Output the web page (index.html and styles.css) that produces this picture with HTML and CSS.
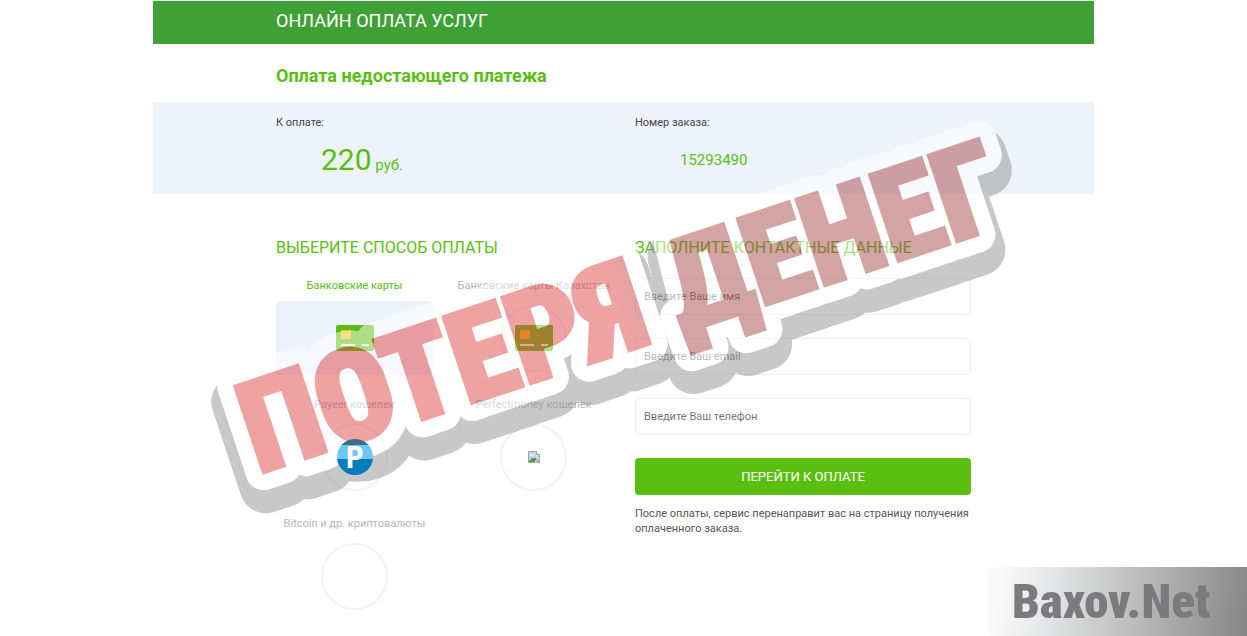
FILE: index.html
```html
<!DOCTYPE html>
<html lang="ru">

	<head>
		<meta charset="UTF-8">
		<title>Онлайн оплата услуг</title>
		<link rel="stylesheet" href="styles.css">
	</head>

	<body>
		<div class="page">
			<header class="header">
				<div class="wrap">ОНЛАЙН ОПЛАТА УСЛУГ</div>
			</header>
			<h1 class="title wrap">Оплата недостающего платежа</h1>
			<div class="order">
				<div class="wrap cols">
					<div>
						<div class="order-label">К оплате:</div>
						<div class="order-value"><span class="sum">220</span> руб.</div>
					</div>
					<div>
						<div class="order-label">Номер заказа:</div>
						<div class="order-value">15293490</div>
					</div>
				</div>
			</div>
			<form class="wrap cols main">
				<section>
					<h2>ВЫБЕРИТЕ СПОСОБ ОПЛАТЫ</h2>
					<div class="methods">
						<label class="method">
							<input type="radio" name="method" checked>
							<span class="name">Банковские карты</span>
							<span class="box">
								<svg width="38" height="26" viewBox="0 0 38 26">
									<rect width="38" height="26" rx="2" fill="#5bbf11"/>
									<rect x="5" y="5" width="10" height="9" fill="#f4c010"/>
									<path d="M5 20h14M26 20h7" stroke="#fff" stroke-width="2"/>
								</svg>
							</span>
						</label>
						<label class="method">
							<input type="radio" name="method">
							<span class="name">Банковские карты Казахстан</span>
							<span class="box"><span class="circle">
								<svg width="38" height="26" viewBox="0 0 38 26">
									<rect width="38" height="26" rx="2" fill="#5bbf11"/>
									<rect x="5" y="5" width="10" height="9" fill="#f4c010"/>
									<path d="M5 20h14M26 20h7" stroke="#fff" stroke-width="2"/>
								</svg>
							</span></span>
						</label>
						<label class="method">
							<input type="radio" name="method">
							<span class="name">Payeer кошелек</span>
							<span class="box"><span class="circle"><span class="payeer">P</span></span></span>
						</label>
						<label class="method">
							<input type="radio" name="method">
							<span class="name">Perfectmoney кошелек</span>
							<span class="box"><span class="circle">
								<svg width="12" height="12" viewBox="0 0 12 12">
									<path d="M.5.5h8l3 3v4l-4 4h-7z" fill="#c4d8f0" stroke="#a0a0a0"/>
									<path d="M8.5.5v3h3" fill="#fff" stroke="#a0a0a0"/>
									<path d="M1 11V10q3-4 6-3l2 1-3 3z" fill="#3fa535"/>
									<path d="M2 5q1-3 4 0z" fill="#fff"/>
									<path d="M12 8v4H8z" fill="#a0a0a0"/>
								</svg>
							</span></span>
						</label>
						<label class="method">
							<input type="radio" name="method">
							<span class="name">Bitcoin и др. криптовалюты</span>
							<span class="box"><span class="circle"></span></span>
						</label>
					</div>
				</section>
				<section>
					<h2>ЗАПОЛНИТЕ КОНТАКТНЫЕ ДАННЫЕ</h2>
					<div class="fields">
						<input type="text" aria-label="Имя" placeholder="Введите Ваше имя">
						<input type="email" aria-label="Email" placeholder="Введите Ваш email">
						<input type="tel" aria-label="Телефон" placeholder="Введите Ваш телефон">
						<button type="button">ПЕРЕЙТИ К ОПЛАТЕ</button>
					</div>
					<p class="note">После оплаты, сервис перенаправит вас на страницу получения оплаченного заказа.</p>
				</section>
			</form>
			<!-- stamp over the page: shadow, outline, letters -->
			<svg class="stamp" viewBox="0 0 941 636">
				<defs>
					<linearGradient id="red">
						<stop offset="0.5" stop-color="#df4747"/>
						<stop offset="0.56" stop-color="#a94b4b"/>
					</linearGradient>
					<text id="stamp-text">ПОТЕРЯ ДЕНЕГ</text>
				</defs>
				<g transform="translate(105 474) rotate(-18.4)">
					<use href="#stamp-text" class="stamp-shadow" x="-3" y="15"/>
					<use href="#stamp-text" class="stamp-outline"/>
					<use href="#stamp-text" class="stamp-letters"/>
				</g>
			</svg>
		</div>
		<div class="mark">Baxov.Net</div>
	</body>

</html>
```
FILE: styles.css
```css
* {
	box-sizing: border-box;
	margin: 0;
	padding: 0;
}

body {
	min-height: 100vh;
	position: relative;
	overflow: hidden;
	background-color: #fff;
	color: #444;
	font: 11px/15px Roboto, "Liberation Sans", sans-serif;
}

.page {
	max-width: 941px;
	margin: 0 auto;
	padding-top: 1px;
	position: relative;
}

.wrap {
	max-width: 695px;
	margin: 0 auto;
}

.cols {
	display: grid;
	grid-template-columns: 1fr 1fr;
	gap: 23px;
}

.header {
	background-color: #3fa135;
	color: #fff;
	font-size: 18px;
	line-height: 40px;
	padding-bottom: 3px;
}

.title {
	color: #58be10;
	font-size: 18px;
	font-weight: 700;
	line-height: 24px;
	padding: 20px 0 14px;
}

.order {
	background-color: #eef3fb;
	padding: 13px 0;
	height: 92px;
}

.order-value {
	color: #58be10;
	font-size: 15px;
	line-height: 40px;
	padding: 10px 0 0 45px;
}

.sum {
	font-size: 30px;
}

.main {
	padding-top: 44px;
}

h2 {
	color: #58be10;
	font-size: 16px;
	font-weight: 400;
	line-height: 20px;
}

.methods {
	display: grid;
	grid-template-columns: 1fr 1fr;
	gap: 22px;
	padding-top: 20px;
}

.method input {
	position: absolute;
	opacity: 0;
}

.name {
	display: flex;
	justify-content: center;
	white-space: nowrap;
	line-height: 16px;
	margin-bottom: 7px;
	color: #a9b8c0;
}

.box {
	display: flex;
	align-items: center;
	justify-content: center;
	height: 74px;
	border-radius: 4px;
}

.method input:checked ~ .name {
	color: #58be10;
}

.method input:checked ~ .box {
	background-color: #eef3fb;
}

.circle {
	display: flex;
	align-items: center;
	justify-content: center;
	width: 67px;
	height: 67px;
	border: 2px solid #eef3fc;
	border-radius: 50%;
}

.payeer {
	position: relative;
	z-index: 1;
	width: 36px;
	border-radius: 50%;
	background: linear-gradient(#3f6c88 18%, #6cc8f2 18%, #6cc8f2 55%, #067cbc 55%);
	color: #fff;
	font: 700 30px/36px "Open Sans", sans-serif;
	text-align: center;
}

.fields {
	display: grid;
	gap: 23px;
	padding-top: 20px;
}

.fields input {
	width: 100%;
	height: 37px;
	padding: 0 8px;
	border: 1px solid #e6effb;
	border-radius: 4px;
	background-color: #fff;
	font: inherit;
}

.fields input::placeholder {
	color: #777;
}

.fields button {
	height: 37px;
	border: 0;
	border-radius: 4px;
	background-color: #5bbf11;
	color: #fff;
	font: 13px Roboto, "Liberation Sans", sans-serif;
}

.note {
	padding-top: 11px;
	color: #555;
}

.stamp {
	position: absolute;
	top: 0;
	left: 0;
	width: 100%;
	overflow: visible;
	pointer-events: none;
	opacity: 0.5;
	font: 900 127px "Roboto Condensed", Roboto, sans-serif;
}

.stamp-letters {
	fill: url(#red);
	stroke: url(#red);
	stroke-width: 4px;
}

.stamp-shadow {
	fill: #939393;
	stroke: #939393;
	stroke-width: 52px;
	stroke-linejoin: round;
}

.stamp-outline {
	fill: #fff;
	stroke: #fff;
	stroke-width: 36px;
	stroke-linejoin: round;
}

.mark {
	position: absolute;
	right: 0;
	bottom: 0;
	width: 259px;
	padding-left: 24px;
	border-radius: 4px 0 0 4px;
	background: linear-gradient(100deg, #fafafa 5%, #e4e5e6 25%, #b8b8b8 60%, #858585);
	font: 900 49px/69px "Roboto Condensed", Roboto, sans-serif;
	color: #7b7b7d;
}
```
